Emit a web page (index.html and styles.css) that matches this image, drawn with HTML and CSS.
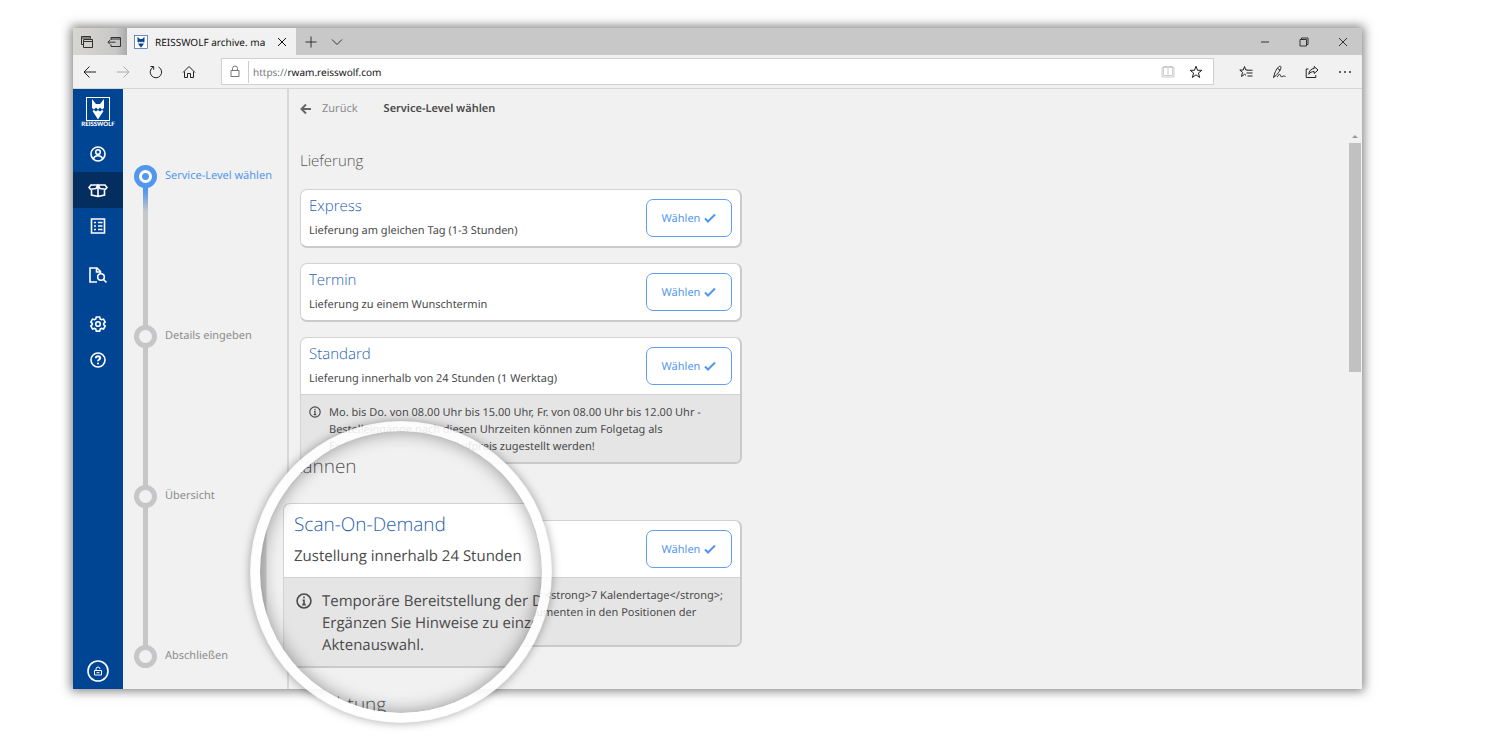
FILE: index.html
```html
<!DOCTYPE html>
<html lang="de">
<head>
<meta charset="utf-8">
<title>REISSWOLF archive. manager</title>
<link rel="stylesheet" href="styles.css">
</head>
<body>
<div class="browser">

  <div class="titlebar">
    <div class="tabtools">
      <button aria-label="Tabs"><svg width="14" height="14" viewBox="0 0 14 14"><path d="M3.500 9.500H1.500v-8h9v2M1.500 3h9M3.500 4.500h9v8h-9zM3.500 6.500h9"/></svg></button>
      <button aria-label="Tabs ablegen"><svg width="14" height="14" viewBox="0 0 14 14"><path d="M4 5V2.500h9.500v9H4V9.500M4 4h9.500M8.500 7.200H1M3 5L1 7.200l2 2.200"/></svg></button>
    </div>
    <div class="tab">
      <svg class="favicon" width="14" height="14" viewBox="0 0 24 24"><rect x="1" y="1" width="22" height="22"/><path d="M6 3l4 4h4l4-4v9l-2 1-2-2-2 2-2-2-2 2-2-1zM7 15l2-1 1 1 2-1 2 1 1-1 2 1-5 7z"/></svg>
      <span>REISSWOLF archive. ma</span>
      <button aria-label="Tab schließen"><svg width="10" height="10" viewBox="0 0 10 10"><path d="M1 1l8 8M9 1L1 9"/></svg></button>
    </div>
    <div class="newtab">
      <button aria-label="Neuer Tab"><svg width="12" height="12" viewBox="0 0 12 12"><path d="M6 .5v11M.5 6h11"/></svg></button>
      <button aria-label="Tabvorschau"><svg width="12" height="12" viewBox="0 0 12 12"><path d="M1 3.500l5 5 5-5"/></svg></button>
    </div>
    <div class="windowtools">
      <button aria-label="Minimieren"><svg width="10" height="10" viewBox="0 0 10 10"><path d="M1 5h8"/></svg></button>
      <button aria-label="Verkleinern"><svg width="10" height="10" viewBox="0 0 10 10"><path d="M1 2.500h6.500V9H1zM2.500 2.500V1H9v6.500H7.500"/></svg></button>
      <button aria-label="Schließen"><svg width="10" height="10" viewBox="0 0 10 10"><path d="M1 1l8 8M9 1L1 9"/></svg></button>
    </div>
  </div>

  <div class="addressbar">
    <div class="nav">
      <button aria-label="Zurück"><svg width="14" height="14" viewBox="0 0 14 14"><path d="M13 7H1M6.500 1.500L1 7l5.500 5.500"/></svg></button>
      <button class="off" aria-label="Vorwärts"><svg width="14" height="14" viewBox="0 0 14 14"><path d="M1 7h12M7.500 1.500L13 7l-5.500 5.500"/></svg></button>
      <button aria-label="Aktualisieren"><svg width="14" height="14" viewBox="0 0 14 14"><path d="M9.500 2A5.700 5.700 0 1 1 4 2.200M1.500 1.500h3.200v3.200"/></svg></button>
      <button aria-label="Startseite"><svg width="14" height="14" viewBox="0 0 14 14"><path d="M1 7.500l6-6 6 6M2.500 6.500v6h3v-4h3v4h3v-6"/></svg></button>
    </div>
    <div class="urlbox">
      <svg class="lock" width="10" height="13" viewBox="0 0 10 13"><path d="M1 5.500h8v6H1zM2.500 5.500V3.500a2.500 2.500 0 0 1 5 0v2"/></svg>
      <label for="url">https://</label>
      <input id="url" type="text" value="rwam.reisswolf.com">
      <button class="book" aria-label="Leseansicht"><svg width="14" height="14" viewBox="0 0 14 14"><path d="M1 2.500h12v9.500H1zM7 2.500V12M2.500 1.500h4L7 2l.5-.5h4v9h-4L7 11l-.5-.5h-4z"/></svg></button>
      <button aria-label="Favorit"><svg width="14" height="14" viewBox="0 0 14 14"><path d="M7 1.200l1.500 4.100h4.300L9.400 8l1.300 4.500L7 9.800l-3.700 2.700L4.600 8 1.200 5.300h4.300z"/></svg></button>
    </div>
    <div class="tools">
      <button aria-label="Hub"><svg width="14" height="14" viewBox="0 0 14 14"><path d="M8.300 5H6.800L5.500 1.500 4.200 5H.8l2.700 2.400-1 4.100 3-2.200 1.500 1M8 5.200h5.500M7.500 8h6M8.500 11h5"/></svg></button>
      <button aria-label="Notizen"><svg width="14" height="14" viewBox="0 0 14 14"><path d="M1.500 12.500L2.800 8C4.500 4 7 .5 8.500 1.300S7.500 7 4 10.500l-2.500 2M5.500 3.500l2.800 1.800M5 12c2-3 3.500-3 3.500-1.500S10 12 11 11.200s1.500.3 2.500.3"/></svg></button>
      <button aria-label="Teilen"><svg width="14" height="14" viewBox="0 0 14 14"><path d="M3.500 4H1.200v8.500h9.600V10M9.200 1.500L13 5 9.200 8.500V6.600C6.500 6.500 5 7.500 3.800 9.300 4 6 6 3.700 9.200 3.500z"/></svg></button>
      <button aria-label="Mehr"><svg class="dots" width="14" height="14" viewBox="0 0 14 14"><circle cx="2" cy="7" r="1"/><circle cx="7" cy="7" r="1"/><circle cx="12" cy="7" r="1"/></svg></button>
    </div>
  </div>

  <div class="app">
    <nav class="sidebar">
      <a class="logo" href="#">
        <svg width="24" height="24" viewBox="0 0 24 24"><rect x=".5" y=".5" width="23" height="23"/><path d="M6 2l4 5h4l4-5v9l-2 1.500-2-2-2 2-2-2-2 2L6 11zM6.500 14L8 13l2 1.500 2-1.500 2 1.500 2-1.500 1.500 1L12 22.500z"/></svg>
        <span>REISSWOLF</span>
      </a>
      <a href="#" aria-label="Benutzer"><svg width="18" height="18" viewBox="0 0 18 18"><circle cx="9" cy="9" r="7"/><circle cx="9" cy="7" r="2.300"/><path d="M4.500 14c.5-2.500 2-3.200 4.500-3.200s4 .7 4.500 3.200"/></svg></a>
      <a class="active" href="#" aria-label="Bestellen"><svg width="20" height="18" viewBox="0 0 20 18"><path d="M10 4H3L1 6.500l1.500 1.700 5.500-.7L10 4l2 3.500 5.500.7L19 6.500 17 4zM3.500 8.200v5.800l6.500 1.500 6.500-1.500V8.200M10 4v11"/></svg></a>
      <a href="#" aria-label="Liste"><svg width="18" height="18" viewBox="0 0 18 18"><path d="M2.500 2h13v14h-13zM5 5.500h2M9 5.500h4.500M5 9h2M9 9h4.500M5 12.500h2M9 12.500h4.500"/></svg></a>
      <a class="spaced" href="#" aria-label="Suche"><svg width="20" height="18" viewBox="0 0 20 18"><path d="M9 16H2V2h7l3.500 3.500V7M8.500 2v4h4"/><circle cx="13" cy="11" r="3.300"/><path d="M15.500 13.500l3 3"/></svg></a>
      <a class="spaced" href="#" aria-label="Einstellungen"><svg width="18" height="18" viewBox="0 0 18 18"><path d="M7.300 2h3.400l.5 2 1.300.7 2-.6 1.700 2.900L14.700 8.400v1.300l1.500 1.400-1.700 2.900-2-.6-1.300.7-.5 2H7.300l-.5-2-1.300-.7-2 .6L1.800 11l1.500-1.400V8.400L1.800 7l1.700-2.900 2 .6L6.800 4z"/><circle cx="9" cy="9" r="2.300"/></svg></a>
      <a href="#" aria-label="Hilfe"><svg width="18" height="18" viewBox="0 0 18 18"><circle cx="9" cy="9" r="7"/><path class="bold" d="M6.800 7.200C6.900 4.500 11.200 4.600 11.200 7c0 1.500-2.200 1.500-2.200 3.200M9 11.700v1.600"/></svg></a>
      <a class="logout" href="#" aria-label="Abmelden"><svg width="22" height="22" viewBox="0 0 22 22"><circle cx="11" cy="11" r="10"/><path class="thin" d="M7.500 10.500h7v4.500h-7zM9 10.500V9a2 2 0 0 1 4 0M9.500 12.700h3"/></svg></a>
    </nav>

    <ol class="steps">
      <li class="current"><span class="dot"></span>Service-Level wählen</li>
      <li><span class="dot"></span>Details eingeben</li>
      <li><span class="dot"></span>Übersicht</li>
      <li><span class="dot"></span>Abschließen</li>
    </ol>

    <main>
      <header>
        <a href="#"><svg width="12" height="12" viewBox="0 0 12 12"><path d="M11 6H2M6 1.500L1.500 6 6 10.500"/></svg>Zurück</a>
        <h1>Service-Level wählen</h1>
      </header>
      <div class="scrollarea">
        <div class="content">
          <h2>Lieferung</h2>
          <section class="card">
            <div class="cardtop">
              <div><h3>Express</h3><p>Lieferung am gleichen Tag (1-3 Stunden)</p></div>
              <button>Wählen<svg width="12" height="10" viewBox="0 0 12 10"><path d="M1 5.500L4 8.500l7-7"/></svg></button>
            </div>
          </section>
          <section class="card">
            <div class="cardtop">
              <div><h3>Termin</h3><p>Lieferung zu einem Wunschtermin</p></div>
              <button>Wählen<svg width="12" height="10" viewBox="0 0 12 10"><path d="M1 5.500L4 8.500l7-7"/></svg></button>
            </div>
          </section>
          <section class="card">
            <div class="cardtop">
              <div><h3>Standard</h3><p>Lieferung innerhalb von 24 Stunden (1 Werktag)</p></div>
              <button>Wählen<svg width="12" height="10" viewBox="0 0 12 10"><path d="M1 5.500L4 8.500l7-7"/></svg></button>
            </div>
            <div class="note">
              <svg viewBox="0 0 12 12"><circle cx="6" cy="6" r="5.200"/><path d="M6 2.700v1.300M5 5.400h1v3.200M4.700 8.700h2.600"/></svg>
              <p>Mo. bis Do. von 08.00 Uhr bis 15.00 Uhr, Fr. von 08.00 Uhr bis 12.00 Uhr -<br>Bestelleingänge nach diesen Uhrzeiten können zum Folgetag als<br>Expresslieferung gegen Aufpreis zugestellt werden!</p>
            </div>
          </section>
          <h2>Scannen</h2>
          <section class="card">
            <div class="cardtop">
              <div><h3>Scan-On-Demand</h3><p>Zustellung innerhalb 24 Stunden</p></div>
              <button>Wählen<svg width="12" height="10" viewBox="0 0 12 10"><path d="M1 5.500L4 8.500l7-7"/></svg></button>
            </div>
            <div class="note">
              <svg viewBox="0 0 12 12"><circle cx="6" cy="6" r="5.200"/><path d="M6 2.700v1.300M5 5.400h1v3.200M4.700 8.700h2.600"/></svg>
              <p>Temporäre Bereitstellung der Dateien für &lt;strong&gt;7 Kalendertage&lt;/strong&gt;;<br>Ergänzen Sie Hinweise zu einzelnen Dokumenten in den Positionen der<br>Aktenauswahl.</p>
            </div>
          </section>
        </div>
        <div class="scrollbar"><span class="arrow"></span><span class="thumb"></span></div>
      </div>
    </main>
  </div>

  <!-- magnifier over the scan card -->
  <div class="lens">
    <div class="zoomed">
      <h2>Scannen</h2>
      <section class="card">
        <div class="cardtop">
          <div><h3>Scan-On-Demand</h3><p>Zustellung innerhalb 24 Stunden</p></div>
        </div>
        <div class="note">
          <svg viewBox="0 0 12 12"><circle cx="6" cy="6" r="5.200"/><path d="M6 2.700v1.300M5 5.400h1v3.200M4.700 8.700h2.600"/></svg>
          <p>Temporäre Bereitstellung der Dateien<br>Ergänzen Sie Hinweise zu einzelnen<br>Aktenauswahl.</p>
        </div>
      </section>
      <h2>Vernichtung</h2>
    </div>
  </div>
</div>
</body>
</html>
```
FILE: styles.css
```css
* {
  box-sizing: border-box;
}

body {
  display: flow-root;
  min-height: 100vh;
  margin: 0;
  background: #fff;
  font-family: "Noto Sans", "Open Sans", sans-serif;
  font-size: 11px;
  text-rendering: geometricPrecision;
  color: #4a4a4a;
}

h1, h2, h3, p, ol {
  margin: 0;
  padding: 0;
}

a {
  color: inherit;
  text-decoration: none;
}

button {
  padding: 0;
  border: none;
  background: none;
  font: inherit;
  text-rendering: inherit;
  color: inherit;
}

svg {
  display: block;
  flex: none;
  fill: none;
  stroke: currentColor;
}

.browser {
  position: relative;
  margin: 28px 138px 60px 73px;
  background: #f1f1f1;
  box-shadow: 0 0 10px 2px rgba(0, 0, 0, .5);
}

/* title bar */
.titlebar {
  display: flex;
  height: 27px;
  background: #c8c8c8;
  color: #333;
}

.titlebar button {
  display: flex;
}

.tabtools {
  display: flex;
  align-items: center;
  justify-content: space-between;
  width: 54px;
  padding: 0 6px 0 7px;
  background: linear-gradient(90deg, #d8d6d0, #c8c8c8 80%, #aaa);
}

.tab {
  display: flex;
  align-items: center;
  width: 169px;
  padding: 0 9px 0 7px;
  background: #f1f1f1;
  font-size: 10px;
  color: #111;
}

.tab span {
  flex: 1;
  margin-left: 7px;
  white-space: nowrap;
}

.favicon {
  fill: #0a4594;
  stroke: none;
}

.favicon rect {
  fill: #fff;
  stroke: #0a4594;
}

.newtab {
  display: flex;
  flex: 1;
  align-items: center;
  gap: 14px;
  padding-left: 9px;
}

.windowtools {
  display: flex;
  align-items: center;
  gap: 29px;
  padding-right: 14px;
}

/* address bar */
.addressbar {
  display: flex;
  align-items: center;
  height: 34px;
  padding: 0 10px;
  border-bottom: 1px solid #d5d5d5;
  color: #222;
}

.nav, .tools {
  display: flex;
  gap: 19px;
}

.dots {
  fill: #333;
  stroke: none;
}

.nav .off {
  color: #aaa;
}

.urlbox {
  display: flex;
  flex: 1;
  align-items: center;
  height: 27px;
  margin: 0 25px;
  padding: 0 10px 0 8px;
  border: 1px solid #d0d0d0;
  background: #fff;
  font-size: 10px;
}

.urlbox .lock {
  color: #777;
}

.urlbox label {
  margin-left: 8px;
  padding: 4px 0 4px 4px;
  border-left: 1px solid #ccc;
  color: #777;
}

.urlbox input {
  flex: 1;
  min-width: 0;
  padding: 0;
  border: none;
  outline: none;
  font: inherit;
  text-rendering: inherit;
  color: #111;
}

.urlbox button {
  margin-left: 14px;
}

.urlbox .book {
  color: #ccc;
}

/* application */
.app {
  display: flex;
  min-height: 600px;
}

.sidebar {
  display: flex;
  flex-direction: column;
  width: 50px;
  background: #004494;
  color: #fff;
}

.sidebar a {
  display: flex;
  align-items: center;
  justify-content: center;
  height: 36px;
}

.sidebar svg {
  stroke-width: 1.6;
}

.sidebar .bold {
  stroke-width: 2;
}

.sidebar .thin {
  stroke-width: 1;
}

.sidebar .active {
  background: #032e5f;
}

.sidebar .spaced {
  margin-top: 13px;
}

.sidebar .logo {
  flex-direction: column;
  height: 47px;
  font-family: Lato, sans-serif;
  font-size: 6px;
  font-weight: 900;
  line-height: 8px;
}

.logo svg {
  fill: #fff;
  stroke: none;
}

.logo rect {
  fill: none;
  stroke: #fff;
  stroke-width: 1;
}

.sidebar .logout {
  margin-top: auto;
}

.steps {
  width: 164px;
  padding: 76px 0 0 11px;
  list-style: none;
  color: #8c8c8c;
}

.steps li {
  position: relative;
  display: flex;
  align-items: flex-start;
  gap: 8px;
  height: 160px;
  line-height: 22px;
  white-space: nowrap;
}

.steps li:last-child {
  height: 23px;
}

.steps li:not(:last-child)::before {
  content: "";
  position: absolute;
  left: 9px;
  top: 22px;
  bottom: -1px;
  width: 5px;
  background: #c5c6c8;
}

.steps .current::before {
  background: linear-gradient(#5297ee 4px, #c5c6c8 24px) !important;
}

.dot {
  width: 23px;
  height: 23px;
  border: 5px solid #c5c6c8;
  border-radius: 50%;
}

.steps .current {
  color: #5297ee;
}

.current .dot {
  border-color: #5297ee;
  background: radial-gradient(#5297ee 3px, #fff 4px);
}

main {
  flex: 1;
  display: flex;
  flex-direction: column;
  border-left: 2px solid #d8d8d8;
}

header {
  display: flex;
  align-items: center;
  gap: 26px;
  height: 39px;
  padding-left: 11px;
}

header a {
  display: flex;
  align-items: center;
  gap: 10px;
  color: #8c8c8c;
}

header svg {
  color: #666;
  stroke-width: 2;
}

h1 {
  font-size: 11px;
  font-weight: 600;
}

.scrollarea {
  display: flex;
  flex: 1;
}

.content {
  flex: 1;
  padding: 20px 11px 27px;
}

h2, h3 {
  font-family: "Open Sans", sans-serif;
  font-size: 15px;
  font-weight: 300;
  line-height: 25px;
  color: #555;
}

h3 {
  color: #1f5fb0;
}

.content h2 {
  margin-bottom: 14px;
  line-height: 27px;
}

.card {
  max-width: 442px;
  border: 1px solid #d2d2d2;
  border-bottom: 2px solid #cacaca;
  border-right: 2px solid #cacaca;
  border-radius: 7px;
  background: #fff;
  overflow: hidden;
}

.content .card {
  margin-bottom: 15px;
}

.cardtop {
  display: flex;
  align-items: center;
  justify-content: space-between;
  height: 56px;
  padding: 0 8px;
}

.cardtop button {
  display: flex;
  align-items: center;
  justify-content: center;
  gap: 4px;
  width: 86px;
  height: 38px;
  border: 1px solid #5f9ff0;
  border-radius: 7px;
  color: #5297ee;
}

.cardtop button svg {
  stroke-width: 2;
}

.cardtop p {
  line-height: 24px;
}

.note {
  display: flex;
  gap: 8px;
  padding: 9px 8px 7px;
  border-top: 1px solid #d2d2d2;
  background: #e5e5e5;
}

.note p {
  line-height: 17px;
  white-space: nowrap;
}

.note svg {
  width: 12px;
  height: 12px;
  margin-top: 2px;
  stroke-width: 1.2;
}

.scrollbar {
  display: flex;
  flex-direction: column;
  align-items: center;
  gap: 5px;
  width: 14px;
  padding-top: 7px;
}

.arrow {
  border: 3px solid transparent;
  border-top: none;
  border-bottom: 3px solid #999;
}

.thumb {
  width: 12px;
  height: 229px;
  background: #c1c1c1;
}

/* magnifier */
.lens {
  position: absolute;
  left: 177px;
  top: 393px;
  width: 302px;
  height: 302px;
  border: 10px solid rgba(255, 255, 255, .88);
  border-radius: 50%;
  background: #f1f1f1 padding-box;
  box-shadow: 0 0 10px rgba(0, 0, 0, .35);
  overflow: hidden;
}

.lens::after {
  content: "";
  position: absolute;
  inset: 0;
  border-radius: 50%;
  box-shadow: inset 0 0 18px rgba(0, 0, 0, .4);
}

.zoomed {
  width: 600px;
  height: 100%;
  padding: 19px 0 0 23px;
  background: linear-gradient(90deg, #d0d0d0 6px, #f1f1f1 7px);
  font-family: "Open Sans", sans-serif;
  font-size: 15px;
}

.zoomed h2, .zoomed h3 {
  font-size: 19px;
  line-height: 32px;
}

.zoomed .card {
  max-width: none;
  margin: 21px 0 20px;
}

.zoomed .cardtop {
  height: 73px;
  padding: 1px 10px 3px;
}

.zoomed .cardtop p {
  line-height: 32px;
}

.zoomed .note {
  gap: 10px;
  padding: 12px 12px 10px;
}

.zoomed .note p {
  line-height: 22px;
}

.zoomed .note svg {
  width: 16px;
  height: 16px;
  margin-top: 3px;
}
```
